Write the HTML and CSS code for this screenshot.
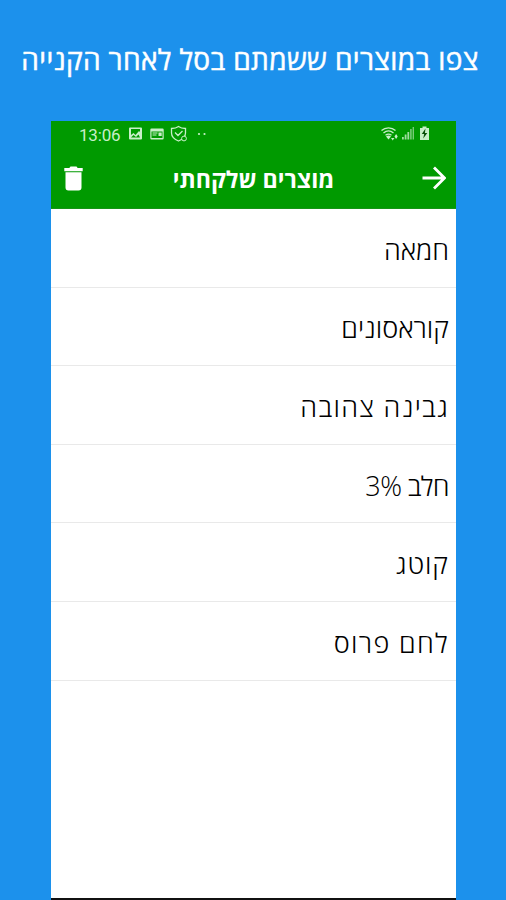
FILE: index.html
```html
<!DOCTYPE html>
<html lang="he" dir="rtl">
<head>
<meta charset="utf-8">
<title>מוצרים שלקחתי</title>
<link rel="stylesheet" href="styles.css">
</head>
<body>
<h1 class="headline"><span>צפו במוצרים ששמתם בסל לאחר הקנייה</span></h1>
<main class="phone">
  <header class="top">
    <div class="status" dir="ltr">
      <span class="time">13:06</span>
      <svg class="st-left" width="76" height="18" viewBox="0 0 76 18">
        <path fill-rule="evenodd" d="M2 2.500h11a1 1 0 0 1 1 1v10a1 1 0 0 1-1 1H2a1 1 0 0 1-1-1V3.500a1 1 0 0 1 1-1zM3 4v6l2.500-2 2 2 3.500-4 1 1V4zM3 12.500h9l-1.500-3-2.500 2.500-2.500-2z"/>
        <path fill-rule="evenodd" d="M23.500 3.500h11a1.200 1.200 0 0 1 1.200 1.200v8.600a1.200 1.200 0 0 1-1.200 1.200h-11a1.200 1.200 0 0 1-1.200-1.200V4.700a1.200 1.200 0 0 1 1.200-1.200zM23.500 6.500v6.500h11v-6.500zM24.500 7.500h5v1h-5zM24.500 9.500h4v1h-4zM30.500 7.500h3.200v3.500h-3.200z"/>
        <path class="line" d="M50.500 1.500c2 1.500 4.500 2 7 2v4.500c0 4-3.500 6.500-7 8-3.500-1.500-7-4-7-8V3.500c2.500 0 5-.5 7-2zM47 7.500l3 3 4.500-4.500"/>
        <circle class="badge" cx="56" cy="13.500" r="2.400"/>
        <circle cx="71" cy="9" r="1.100"/><circle cx="76.500" cy="9" r="1.100"/>
      </svg>
      <svg class="st-right" width="50" height="18" viewBox="0 0 50 18">
        <path class="line" d="M1.500 5.500c4-3.600 10-3.600 14 0M3.500 8c3-2.600 7-2.600 10 0M5.500 10.300c2-1.600 4-1.600 6 0"/>
        <path d="M8.500 14.500l-2.500-3c1.700-1.200 3.500-1.200 5 0zM11 13h3.400l-1.700 2.500zM14.500 11.500l1.600-2.500 1.600 2.500-1.600 2.500z"/>
        <path d="M22 12h1.800v2.500H22zM24.700 9.500h1.800v5h-1.800zM27.400 7h1.800v7.500h-1.800z" opacity=".8"/>
        <path d="M30.100 4h1.600v10.500h-1.600zM32.600 2h1.400v12.500h-1.400z" opacity=".6"/>
        <path d="M42.500 1.500h4V3H49v12h-9V3h2.500z"/>
        <path class="bolt" d="M45.500 3.500L41.800 9h2.400l-1 4.500L47.300 8h-2.400z"/>
      </svg>
    </div>
    <div class="bar">
      <svg class="arrow" width="24" height="24" viewBox="0 0 24 24"><path d="M.5 12h21.500M12 1.500L22.500 12 12 22.500"/></svg>
      <h2 class="title"><span>מוצרים שלקחתי</span></h2>
      <svg class="trash" width="19" height="25" viewBox="0 0 19 25"><path d="M1.500 6.300h16v15.200a3 3 0 0 1-3 3h-10a3 3 0 0 1-3-3zM.3 2h5L6.500.6h6L13.700 2h5v3.200H.3z"/></svg>
    </div>
  </header>
  <ul class="list">
    <li><span>חמאה</span></li>
    <li><span>קוראסונים</span></li>
    <li><span class="wide">גבינה צהובה</span></li>
    <li><span class="milk">חלב 3%</span></li>
    <li><span class="roomy">קוטג</span></li>
    <li><span class="wide">לחם פרוס</span></li>
  </ul>
</main>
</body>
</html>
```
FILE: styles.css
```css
* { box-sizing: border-box; margin: 0; padding: 0; }
html, body { height: 900px; overflow: hidden; }
body { background: #1c91ec; display: flex; flex-direction: column; font-family: "Open Sans", "DejaVu Sans", sans-serif; }
.headline { height: 121px; flex: none; text-align: center; color: #fff; font-size: 28px; font-weight: 500; letter-spacing: .38px; -webkit-text-stroke: .5px #fff; line-height: 118px; white-space: nowrap; padding-right: 6px; }
.phone { direction: ltr; width: 405px; margin-right: 50px; flex: 1; background: #fff; display: flex; flex-direction: column; border-bottom: 2px solid #111; }
.top { height: 88px; background: #009a00; border-bottom: 1px solid #159515; flex: none; }
.status { display: flex; height: 27px; padding: 4px 26px 0 28px; align-items: flex-start; color: #c8efc8; }
.time { font-family: Roboto, sans-serif; font-size: 17px; line-height: 20px; letter-spacing: -.2px; width: 49px; }
.status svg { fill: #c8efc8; overflow: visible; }
.status .line { fill: none; stroke: #c8efc8; stroke-width: 1.3; }
.status .badge { fill: #009a00; stroke: #c8efc8; stroke-width: 1; }
.status .bolt { fill: #064d06; }
.st-right { margin-left: auto; }
.bar { direction: rtl; display: flex; height: 60px; align-items: center; justify-content: space-between; padding: 0 10px 0 13px; }
.arrow path { fill: none; stroke: #fff; stroke-width: 2.8; }
.trash { fill: #fff; }
.title { color: #fff; font-size: 23.2px; font-weight: 700; line-height: 32px; white-space: nowrap; padding: 2px 0 0 2px; }
.list { direction: rtl; list-style: none; }
.list li { height: 78.6px; border-bottom: 1px solid #e9e9e9; padding: 3px 7px 0 0; display: flex; align-items: center; font-size: 27px; font-weight: 300; color: #000; white-space: nowrap; }
.wide { letter-spacing: 1.35px; }
.roomy { letter-spacing: .9px; }
.milk { letter-spacing: -.6px; }
```
